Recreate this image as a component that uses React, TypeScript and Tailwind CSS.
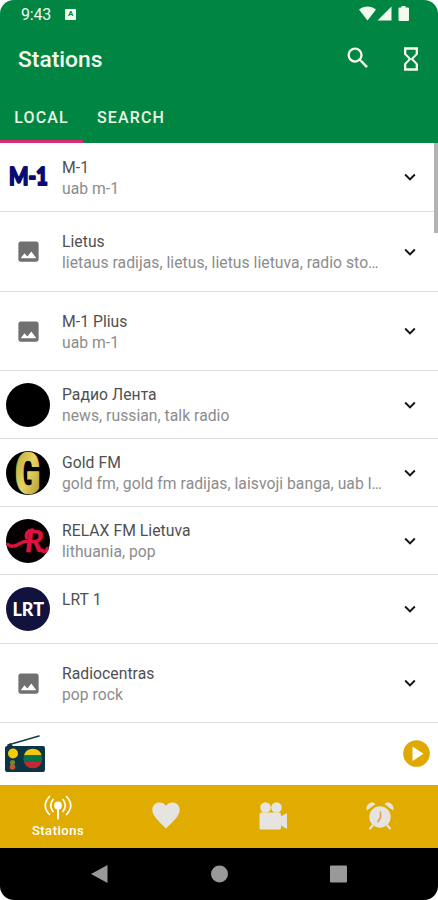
import React from 'react';
import { MdExpandMore, MdHourglassEmpty, MdImage, MdSearch } from 'react-icons/md';

interface Station {
  name: string;
  tags: string;
  logo: React.ReactNode;
  height: string;
}

const placeholder = <MdImage className="h-[27px] w-[27px] text-[#707070]" />;

const MLogo = () => (
  <svg viewBox="0 0 44 44" className="h-11 w-11">
    <text x="3" y="30" textLength="39" lengthAdjust="spacingAndGlyphs" fill="#0a0a72" stroke="#0a0a72" strokeWidth="1.800" strokeLinejoin="round" fontFamily="Lato, sans-serif" fontWeight="900" fontSize="24.500">M-1</text>
  </svg>
);

const GoldLogo = () => (
  <svg viewBox="0 0 44 44" className="h-11 w-11">
    <defs>
      <linearGradient id="gold" x1="0" y1="0" x2="1" y2="1">
        <stop offset="0" stopColor="#b59a2c" />
        <stop offset="0.5" stopColor="#e6d566" />
        <stop offset="1" stopColor="#a98d22" />
      </linearGradient>
    </defs>
    <circle cx="22" cy="22" r="22" fill="#000" />
    <text transform="translate(9 41.500) scale(0.74 1.1)" fontFamily="Roboto, sans-serif" fontWeight="900" fontSize="50" fill="url(#gold)" stroke="url(#gold)" strokeWidth="1.500">G</text>
  </svg>
);

const RelaxLogo = () => (
  <svg viewBox="0 0 44 44" className="h-11 w-11">
    <circle cx="22" cy="22" r="22" fill="#050102" />
    <text x="19" y="33" fontFamily="Lato, sans-serif" fontStyle="italic" fontWeight="700" fontSize="31" fill="#e0103f" stroke="#e0103f" strokeWidth="0.400" strokeLinejoin="round">R</text>
    <g fill="none" stroke="#e0103f" strokeWidth="3.400" strokeLinecap="round">
      <path d="M2 25.500C5 28.500 9 27.500 13 25s7-3.500 12-3" />
      <path d="M20.500 18.500c-1-4.500 2-7 6-7.500" />
      <path d="M36 31c2 2.500 4 1.500 5.500-1.500" />
    </g>
  </svg>
);

const LrtLogo = () => (
  <svg viewBox="0 0 44 44" className="h-11 w-11">
    <circle cx="22" cy="22" r="22" fill="#12123f" />
    <text x="6.5" y="28.500" textLength="31.500" lengthAdjust="spacingAndGlyphs" fontFamily="Lato, sans-serif" fontWeight="900" fontSize="18" fill="#fff">LRT</text>
  </svg>
);

const stations: Station[] = [
  { name: 'M-1', tags: 'uab m-1', logo: <MLogo />, height: 'h-[69px]' },
  { name: 'Lietus', tags: 'lietaus radijas, lietus, lietus lietuva, radio sto…', logo: placeholder, height: 'h-20' },
  { name: 'M-1 Plius', tags: 'uab m-1', logo: placeholder, height: 'h-[79px]' },
  { name: 'Радио Лента', tags: 'news, russian, talk radio', logo: <div className="h-11 w-11 rounded-full bg-black" />, height: 'h-[68px]' },
  { name: 'Gold FM', tags: 'gold fm, gold fm radijas, laisvoji banga, uab l…', logo: <GoldLogo />, height: 'h-[68px]' },
  { name: 'RELAX FM Lietuva', tags: 'lithuania, pop', logo: <RelaxLogo />, height: 'h-[68px]' },
  { name: 'LRT 1', tags: '', logo: <LrtLogo />, height: 'h-[69px]' },
  { name: 'Radiocentras', tags: 'pop rock', logo: placeholder, height: 'h-[79px]' },
];

const StatusBar = () => (
  <div className="flex h-7 items-center pl-[21px] pr-[29px] text-[#f3faee]">
    <span className="pt-px text-[16px] tracking-[-0.2px]">9:43</span>
    <span className="ml-[14px] flex h-[11px] w-[11px] items-center justify-center rounded-[1px] bg-[#f3faee] text-[8px] font-bold text-[#008542]">A</span>
    <svg viewBox="0 0 50 16" className="ml-auto h-4 w-[50px]" fill="currentColor">
      <path d="M0 3.500C5-.5 12-.5 17 3.500L8.500 14.500z" />
      <path d="M32.500.5v14h-14z" />
      <path d="M42.500 0h4v1.500H49q1 0 1 1V14q0 1-1 1h-8.500q-1 0-1-1V2.500q0-1 1-1h2z" />
    </svg>
  </div>
);

const StationRow = ({ station }: { station: Station }) => (
  <li className={`flex items-center border-b border-[#dedede] pl-1.5 pr-[17px] ${station.height}`}>
    <div className="flex h-11 w-11 shrink-0 items-center justify-center">{station.logo}</div>
    <div className="ml-3 w-[328px] min-w-0 pt-[2px]">
      <p className="h-[21px] whitespace-nowrap text-[15.700px] leading-[21px] tracking-[0.050px] text-[#505050]">{station.name}</p>
      <p className="h-[22px] whitespace-nowrap text-[15.700px] leading-[22px] tracking-[0.040px] text-[#8c8c8c]">{station.tags}</p>
    </div>
    <MdExpandMore className="ml-auto h-[22px] w-[22px] shrink-0 text-[#151515]" />
  </li>
);

const MiniPlayer = () => (
  <div className="flex h-[62px] items-center justify-between bg-white pb-px pl-1 pr-2">
    <svg viewBox="0 0 42 38" className="h-[38px] w-[42px]">
      <path d="M4 10L35 1" stroke="#173c46" strokeWidth="1.600" strokeLinecap="round" />
      <path d="M1 13q0-2 2-2l3-3 3 3h30q2 0 2 2v22q0 2-2 2H3q-2 0-2-2z" fill="#0b3542" />
      <circle cx="9" cy="18.500" r="5" fill="#f3cd08" />
      <circle cx="8.500" cy="27.500" r="2.600" fill="#77853a" />
      <circle cx="8.500" cy="32" r="2.800" fill="#c2592b" />
      <path d="M20 20a9.300 9.300 0 0 1 17.600 0z" fill="#f3c70e" />
      <path d="M20 20h17.600q1.300 3.500 0 7H20q-1.300-3.500 0-7z" fill="#087347" />
      <path d="M20 27h17.600a9.300 9.300 0 0 1-17.600 0z" fill="#c32835" />
    </svg>
    <svg viewBox="0 0 27 27" className="h-[27px] w-[27px]">
      <circle cx="13.500" cy="13.500" r="13.300" fill="#e0a900" />
      <path d="M9.500 6.500v14.500l11-7.250z" fill="#fff" />
    </svg>
  </div>
);

const BottomNav = () => (
  <nav className="grid h-[63px] grid-cols-[116px_99px_116px_98px] bg-[#e0ac00] text-[#e5e4e0]">
    <button className="flex flex-col items-center pt-[9px] text-white">
      <svg viewBox="0 0 28 26" className="h-[26px] w-7" fill="none" stroke="currentColor" strokeWidth="1.700" strokeLinecap="round">
        <circle cx="14" cy="11.500" r="3.900" fill="currentColor" stroke="none" />
        <path d="M14 13v11.500" strokeWidth="2" />
        <path d="M9 5.500q-4.500 6 0 12M19 5.500q4.500 6 0 12M5.500 2.500q-8.500 9 0 18M22.500 2.500q8.500 9 0 18" />
      </svg>
      <span className="mt-[3px] text-[13px] font-medium leading-[16px] tracking-[0.5px]">Stations</span>
    </button>
    <button className="flex items-start justify-center pt-[17px]">
      <svg viewBox="0 0 28 27" className="h-[27px] w-7" fill="currentColor">
        <path d="M14 26.500C10 22 .3 15 .3 7.800.3 0 9.500-2 14 3.800 18.500-2 27.700 0 27.700 7.800 27.700 15 18 22 14 26.500z" />
      </svg>
    </button>
    <button className="flex items-start justify-center pt-[17px]">
      <svg viewBox="0 0 29 28" className="h-7 w-[29px]" fill="currentColor">
        <circle cx="6.500" cy="5.500" r="5.300" />
        <circle cx="17.500" cy="5.500" r="5.300" />
        <path d="M2 10.500h18q2 0 2 2v2l6-3.500v16l-6-3.500V26q0 1.500-1.500 1.500h-19Q.500 27.500.500 26V12q0-1.500 1.500-1.500z" />
      </svg>
    </button>
    <button className="flex items-start justify-center pt-[17px]">
      <svg viewBox="0 0 28 28" className="h-7 w-7" fill="none" stroke="currentColor" strokeWidth="2.200" strokeLinecap="round">
        <circle cx="14" cy="15" r="10.700" fill="currentColor" stroke="none" />
        <path d="M.8 8.500C-1 2 6-2 9.500 2zM27.200 8.500C29 2 22-2 18.500 2z" fill="currentColor" stroke="none" />
        <path d="M6.500 23.500L4 26.500M21.500 23.500l2.500 3" />
        <path d="M14.500 10v5.500l-2.500 4" stroke="#df9f52" strokeWidth="1.700" />
      </svg>
    </button>
  </nav>
);

export default function App() {
  return (
    <div className="h-[900px] w-[438px] overflow-hidden rounded-[14px] bg-white font-[Roboto,sans-serif]">
      <header className="h-[143px] bg-[#008542]">
        <StatusBar />
        <div className="flex h-16 items-center pl-[18px] pr-[13px] text-[#f5faed]">
          <h1 className="pt-px text-[22.800px] font-medium">Stations</h1>
          <MdSearch className="-mt-1 ml-auto h-7 w-7" />
          <MdHourglassEmpty className="-mt-0.5 ml-[25px] h-7 w-7" />
        </div>
        <div className="flex h-[51px] text-[16px] font-medium tracking-[1.150px] text-[#e9f5e2]">
          <button className="w-[83px] border-b-[3px] border-[#d52e76] pt-[3px]">LOCAL</button>
          <button className="w-24 border-b-[3px] border-transparent pt-[3px]">SEARCH</button>
        </div>
      </header>
      <main className="relative">
        <ul>
          {stations.map((s) => <StationRow key={s.name} station={s} />)}
        </ul>
        <div className="absolute right-0 top-0 h-[90px] w-1 bg-[#b3b3b3]" />
      </main>
      <MiniPlayer />
      <BottomNav />
      <div className="flex h-[52px] items-start bg-black pl-[91px] pt-[17px]">
        <svg viewBox="0 0 257 18" className="h-[18px] w-[257px]" fill="#999">
          <path d="M16.500 0v18L0 9z" />
          <circle cx="128.500" cy="9" r="8.500" />
          <rect x="239" y="0.5" width="17" height="17" rx="1" />
        </svg>
      </div>
    </div>
  );
}
